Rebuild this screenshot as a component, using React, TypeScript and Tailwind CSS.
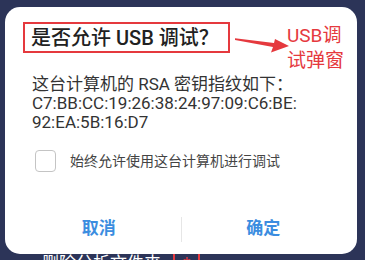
import React, { useState } from 'react';

const font = 'font-[Roboto,"Noto_Sans_CJK_SC",sans-serif]';

const App: React.FC = () => {
  const [always, setAlways] = useState(false);

  return (
    <div className={`relative h-[260px] w-[365px] overflow-hidden bg-[#2c3458] ${font}`}>
      {/* page content behind the dialog */}
      <div className="absolute left-[42px] top-[251px] flex items-center gap-3 text-[17px] leading-[20px] text-white">
        <span>删除分析文件夹</span>
        <span className="border-2 border-[#e5393e] px-2 text-[#e5393e]">*</span>
      </div>

      <div className="relative z-10 ml-[5px] mt-[7px] flex h-[247px] w-[352px] flex-col rounded-[15px] bg-white">
        {/* annotation */}
        <svg className="absolute left-[225px] top-[23px] h-[30px] w-[62px]" viewBox="0 0 62 30">
          <polygon points="5,8.3 44,13 45,9 59,16 41,22.5 43,17 5,9.9" fill="#e5393e" />
        </svg>
        <div className="absolute left-[282px] top-[16px] text-[19px] leading-[25px] text-[#e5393e]">
          <div>USB调</div>
          <div>试弹窗</div>
        </div>

        <div className="ml-[18px] mt-[15px] flex h-[31px] w-[207px] items-center border-2 border-[#e5393e] pl-[6px]">
          <h2 className="whitespace-nowrap text-[20px] font-medium leading-none text-[#212121]">是否允许 USB 调试？</h2>
        </div>

        <p className="ml-[27px] mt-[22px] text-[17px] leading-[19px] text-[#333]">
          这台计算机的 RSA 密钥指纹如下：
          <br />
          C7:BB:CC:19:26:38:24:97:09:C6:BE:
          <br />
          92:EA:5B:16:D7
        </p>

        <label className="ml-[30px] mt-[18px] flex cursor-pointer items-center gap-[14px]">
          <span
            onClick={() => setAlways(!always)}
            className={`h-[22px] w-[21px] rounded-[4px] border-[1.5px] ${always ? 'border-[#3d8fe0] bg-[#3d8fe0]' : 'border-[#c4c4c4] bg-white'}`}
          />
          <span className="text-[14px] leading-[22px] text-[#444]">始终允许使用这台计算机进行调试</span>
        </label>

        <div className="mt-auto flex h-[50px] items-center px-3">
          <button className="flex-1 text-[17px] font-bold text-[#3b8de0]">取消</button>
          <div className="h-[25px] w-px bg-[#e6e6e6]" />
          <button className="flex-1 text-[17px] font-bold text-[#3b8de0]">确定</button>
        </div>
      </div>
    </div>
  );
};

export default App;
